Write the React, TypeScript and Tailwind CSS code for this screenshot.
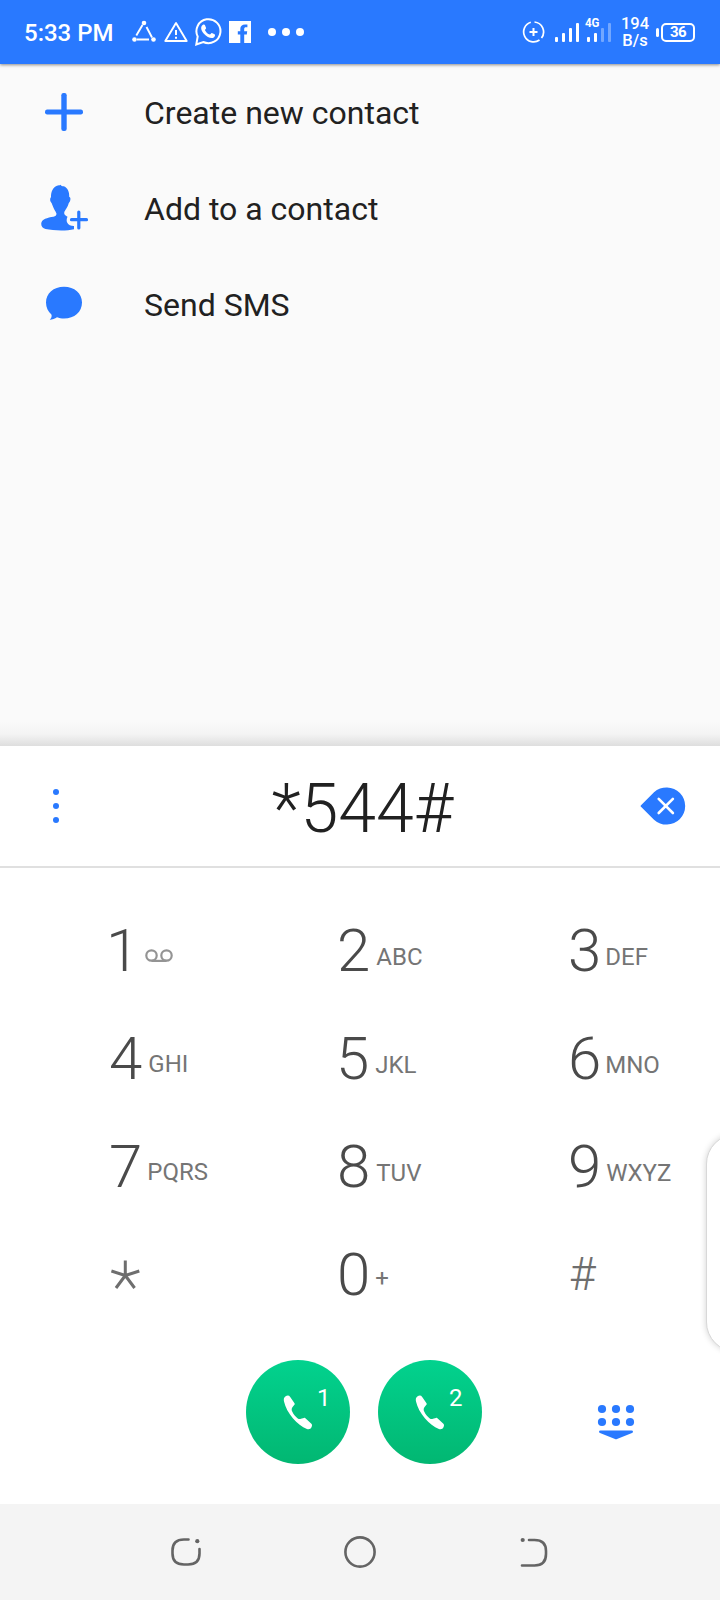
/**
 * Dialer — phone keypad with contact actions and dual SIM call buttons.
 */

import React from 'react';

interface DialKey {
  digit: string;
  label?: string;
  digitClass?: string;
  labelClass?: string;
}

const KEYS: DialKey[] = [
  { digit: '1', digitClass: '-ml-[3px]' },
  { digit: '2', label: 'ABC', digitClass: '-ml-px', labelClass: 'ml-[6px]' },
  { digit: '3', label: 'DEF', digitClass: '-ml-px', labelClass: 'ml-[4px]' },
  { digit: '4', label: 'GHI', labelClass: 'ml-[6px] -translate-y-px' },
  { digit: '5', label: 'JKL', digitClass: '-ml-[2px]', labelClass: 'ml-[6px]' },
  { digit: '6', label: 'MNO', digitClass: '-ml-px', labelClass: 'ml-[4px]' },
  { digit: '7', label: 'PQRS', labelClass: 'ml-[5px] -translate-y-px' },
  { digit: '8', label: 'TUV', digitClass: '-ml-px', labelClass: 'ml-[6px]' },
  { digit: '9', label: 'WXYZ', digitClass: '-ml-px', labelClass: 'ml-[5px]' },
  { digit: '*' },
  { digit: '0', label: '+', digitClass: '-ml-px', labelClass: 'ml-[5px] -translate-y-[3px]' },
  { digit: '#' },
];

const ACTIONS = [
  { label: 'Create new contact', icon: <PlusIcon /> },
  { label: 'Add to a contact', icon: <PersonAddIcon /> },
  { label: 'Send SMS', icon: <BubbleIcon /> },
];

function PlusIcon() {
  return (
    <svg width="64" height="64" viewBox="0 0 64 64" fill="#2979ff">
      <rect x="13" y="29.5" width="38" height="5" rx="2.2" />
      <rect x="29.3" y="13" width="5.4" height="38" rx="2.2" />
    </svg>
  );
}

function PersonAddIcon() {
  return (
    <svg width="64" height="64" viewBox="0 0 64 64" fill="#2979ff">
      <path d="M28.5 8.7c.7 1.4 1.8 1.2 3.2 1.6 3.7 1.2 5.7 5.2 5.5 10.5 2 .8 1.4 4.5-.4 6.2-.9 4-3.300 6.500-4.400 8.700-.4 1.300-.2 2.400.6 3.300 1 .8 1.700 1.200 2.500 1.800-2.300 4.700.1 9.300 6.500 9.200v3.200c-7.500 1.900-20.500 1.500-28.500-.2-2.500-.7-4.300-2.400-4.300-5.300.2-4.500 6.300-6.200 12.300-7 2-.4 2.900-1.400 3-3-.1-1.400-2.500-3.700-4.800-10.500-1.700-1.400-2.200-4.700-.7-6.200-.1-4.700 1.700-9.500 6-11.200 1.300-.5 2.700-.4 3.500-1.100z" />
      <path d="M39.5 43.7h15M46.8 36v16" fill="none" stroke="#2979ff" strokeWidth="3.2" strokeLinecap="round" />
    </svg>
  );
}

function BubbleIcon() {
  return (
    <svg width="64" height="64" viewBox="0 0 64 64" fill="#2979ff">
      <path d="M32 14.700c10.500 0 18 6.600 18 15.800 0 9.300-7.500 16-18 16-2.600 0-4.800-.4-7-1.200-2.100 1.600-4.700 2.500-7.300 2.500 1.700-1.700 2.400-3.700 1.700-5.400C16 39.500 14 35.500 14 30.500c0-9.200 7.500-15.800 18-15.800z" />
    </svg>
  );
}

function StatusBar() {
  return (
    <header className="relative z-10 flex h-16 shrink-0 items-center bg-[#2979ff] text-white shadow-[0_1px_3px_rgba(0,0,0,0.45)]">
      <span className="w-[132px] pt-px pl-[24px] text-[24px] leading-none font-medium whitespace-nowrap">5:33 PM</span>

      {/* Notification icons */}
      <svg width="24" height="24" viewBox="0 0 24 24" fill="none" stroke="white" strokeWidth="1.9">
        <path d="M10.5 5 4.3 15.5M14.5 7l5.500 10.5M5 19.500h12" />
        <g fill="white" stroke="none">
          <circle cx="12" cy="3" r="2.3" />
          <circle cx="2.5" cy="19.5" r="2.3" />
          <circle cx="21.5" cy="19.5" r="2.3" />
        </g>
      </svg>
      <svg className="ml-2" width="24" height="24" viewBox="0 0 24 24" fill="none" stroke="white" strokeWidth="1.9" strokeLinejoin="round">
        <path d="M12 3 1.3 21h21.400z" />
        <path d="M12 10v5M12 16.800v2" strokeWidth="2" />
      </svg>
      <svg className="-mt-[2px] ml-[6px]" width="28" height="30" viewBox="0 0 28 30" fill="none" stroke="white" strokeWidth="2">
        <path d="M2.300 28.500 3.700 20.500A12 12 0 1 1 9.300 26z" />
        <path d="M9 8.800c.9-.5 1.700-.3 2 .5l1.100 2.600c.2.700-.8 1.500-1.200 2 1 2.300 2.800 3.900 5 4.700.7-.5 1.300-1.800 2-1.600l2.700 1.300c1 .5.200 2.700-1.200 3.400-2.300 1.100-6.600-.7-9.500-4-2.900-3.200-3.900-6.900-.9-8.900z" fill="white" stroke="none" />
      </svg>
      <svg className="ml-[7px]" width="22" height="22" viewBox="0 0 22 22">
        <path fill="white" d="M0 0h22v22h-6.800v-8.500h2.600l.4-3.200h-3V8c0-1.100.5-1.700 1.900-1.700h1.300V3.500h-2.300c-3 0-4.800 1.700-4.800 4.500v2.300H8.800v3.200h2.500V22H0z" />
      </svg>
      <div className="ml-[17px] flex gap-[6px]">
        <span className="size-2 rounded-full bg-white" />
        <span className="size-2 rounded-full bg-white" />
        <span className="size-2 rounded-full bg-white" />
      </div>

      {/* Network and battery */}
      <div className="ml-auto flex items-center pr-[25px]">
        <svg width="23" height="24" viewBox="0 0 23 24" fill="none" stroke="white" strokeWidth="1.7">
          <path d="M8.800 2.300A10 10 0 1 0 17.500 20M12.500 2A10 10 0 0 1 19.500 18" />
          <path d="M11.500 8v8M7.500 12h8" strokeWidth="2" />
        </svg>
        <svg className="ml-[10px] overflow-visible" width="58" height="28" viewBox="0 0 58 28" fill="white">
          <rect x="0" y="19" width="3" height="5" rx="1" />
          <rect x="7" y="15" width="3" height="9" rx="1" />
          <rect x="14" y="10" width="3" height="14" rx="1" />
          <rect x="21" y="5" width="3" height="19" rx="1" />
          <rect x="32" y="19" width="3" height="5" rx="1" />
          <rect x="39" y="15" width="3" height="9" rx="1" />
          <rect x="46" y="10" width="3" height="14" rx="1" opacity=".35" />
          <rect x="53" y="5" width="3" height="19" rx="1" opacity=".35" />
          <text x="30" y="9" fontSize="12.5" fontWeight="700" textLength="14.5" lengthAdjust="spacingAndGlyphs">4G</text>
        </svg>
        <div className="ml-[8px] flex w-[28px] flex-col items-center text-[16.5px] leading-[17px] font-medium whitespace-nowrap">
          <span>194</span>
          <span>B/s</span>
        </div>
        <span className="ml-[7px] h-[9px] w-[3px] rounded-sm bg-white" />
        <span className="ml-[2px] flex h-[19px] w-[34px] items-center justify-center rounded-[5px] border-2 border-white text-[15px] leading-none font-bold tracking-[-0.5px]">
          36
        </span>
      </div>
    </header>
  );
}

function KeyCell({ digit, label, digitClass = '', labelClass = '' }: DialKey) {
  if (digit === '*') {
    return (
      <div className="flex h-[108px] items-center">
        <svg className="mt-[2px] ml-[2px]" width="29" height="30" viewBox="0 0 29 30" fill="none" stroke="#6e6e6e" strokeWidth="3">
          <path d="M14.300 .500v15M14.300 15.500.400 11M14.300 15.500l14-4.500M14.300 15.500 5 28M14.300 15.500 23.600 28" />
        </svg>
      </div>
    );
  }
  if (digit === '#') {
    return (
      <div className="flex h-[108px] items-center text-[46px] leading-none font-light text-[#6e6e6e]">#</div>
    );
  }
  return (
    <div className="flex h-[108px] items-baseline">
      <span className={`text-[60px] leading-[110px] font-light text-[#4a4a4a] ${digitClass}`}>{digit}</span>
      {label ? (
        <span className={`text-[24px] text-[#757575] ${labelClass}`}>
          <span className="relative -top-[6px]">{label}</span>
        </span>
      ) : (
        <svg className="relative top-[-8px] ml-[6px]" width="28" height="14" viewBox="0 0 28 14" fill="none" stroke="#949494" strokeWidth="2.2">
          <circle cx="6.5" cy="6.5" r="5.2" />
          <circle cx="21.5" cy="6.5" r="5.2" />
          <path d="M6.500 11.900h15" />
        </svg>
      )}
    </div>
  );
}

function CallButton({ sim }: { sim: number }) {
  return (
    <button className="relative size-[104px] rounded-full bg-linear-to-b from-[#02d28e] to-[#02b772] text-white">
      <svg className="absolute top-[35px] left-[37px]" width="30" height="35" viewBox="0 0 30 35" fill="white">
        <path d="M2.300 1.600C4.200.2 6 .3 7.200 1.900l4.300 6.300c.4.700.2 1.300-.3 1.800L9.400 12.300c-.9 1.300-.9 2.800-.2 4.200 1.500 3.100 3.300 5.300 5.600 6.900 1 .6 2 .6 3.200.3l2.900-.8c.7-.2 1.300 0 1.800.5l5.700 5.400c.9.900.7 2 .2 3.100-.8 1.900-2.500 2.700-4.700 2C14.500 30.500 3.500 18 1 6.500.6 4.500.8 2.700 2.300 1.600z" />
      </svg>
      <span className="absolute top-[26px] left-[71px] text-[24px] leading-6">{sim}</span>
    </button>
  );
}

function NavBar() {
  return (
    <nav className="flex h-24 shrink-0 items-center justify-center bg-[#f4f4f4]">
      <svg width="380" height="36" viewBox="0 0 380 36" fill="none" stroke="#646464" strokeWidth="2.6" strokeLinecap="round">
        <path d="M18.500 5.500H14q-11.500 0-11.500 11v3q0 11 11.500 11h4q11.500 0 11.500-11V15" />
        <circle cx="27.3" cy="7.2" r="2.1" fill="#646464" stroke="none" />
        <circle cx="190" cy="18" r="14.6" />
        <path d="M359 6h5.500q11.500 0 11.500 11v3q0 11.500-11.500 11.500H352" />
        <circle cx="352.7" cy="6" r="2.1" fill="#646464" stroke="none" />
      </svg>
    </nav>
  );
}

export default function App() {
  return (
    <div className="relative flex h-[1600px] w-[720px] flex-col overflow-hidden bg-[#fafafa] font-['Roboto',sans-serif]">
      <StatusBar />

      {/* Contact actions */}
      <ul className="h-[658px] shrink-0">
        {ACTIONS.map((a) => (
          <li key={a.label} className="flex h-24 items-center pl-8 text-[#212121]">
            {a.icon}
            <span className="ml-[48px] pt-[2px] text-[32px] leading-none">{a.label}</span>
          </li>
        ))}
      </ul>
      <div className="h-6 shrink-0 bg-linear-to-b from-[#fafafa] via-[#f4f4f4] to-[#dedede]" />

      {/* Entered number */}
      <section className="flex h-[122px] shrink-0 items-center border-b-2 border-[#e0e0e0] bg-white">
        <div className="ml-[53px] flex w-[6px] flex-col gap-2">
          <span className="size-[6px] rounded-full bg-[#2979ff]" />
          <span className="size-[6px] rounded-full bg-[#2979ff]" />
          <span className="size-[6px] rounded-full bg-[#2979ff]" />
        </div>
        <div className="flex-1 pt-[5px] pl-[26px] text-center text-[68px] leading-none font-light text-[#212121]">*544#</div>
        <svg className="mr-[34px]" width="46" height="38" viewBox="0 0 46 38">
          <path d="M1 18.200 14 5.300A18.600 18.600 0 1 1 14 32.700L1 19.800q-.8-.8 0-1.600z" fill="#2979ff" />
          <path d="m18.700 11.800 14.200 14.200M32.900 11.800 18.700 26" stroke="white" strokeWidth="2.6" strokeLinecap="round" />
        </svg>
      </section>

      {/* Keypad */}
      <section className="grid shrink-0 grid-cols-[229px_231px_1fr] bg-white pt-7 pl-[109px]">
        {KEYS.map((k) => (
          <KeyCell key={k.digit} {...k} />
        ))}
      </section>

      <section className="flex h-[176px] shrink-0 items-start bg-white pt-8 pl-[246px]">
        <div className="flex gap-7">
          <CallButton sim={1} />
          <CallButton sim={2} />
        </div>
        <svg className="mt-[44px] ml-[115px]" width="38" height="36" viewBox="0 0 38 36" fill="#2979ff">
          <circle cx="5" cy="5" r="4.1" />
          <circle cx="19" cy="5" r="4.1" />
          <circle cx="33" cy="5" r="4.1" />
          <circle cx="5" cy="18" r="4.1" />
          <circle cx="19" cy="18" r="4.1" />
          <circle cx="33" cy="18" r="4.1" />
          <path d="M3.500 26.500h31q1.500 0 1.500 1.200 0 .9-1 1.300l-15 6q-1 .4-2 0L3 29q-1-.4-1-1.300 0-1.200 1.500-1.200z" />
        </svg>
      </section>

      <NavBar />

      {/* Edge panel handle */}
      <div className="absolute top-[1134px] -right-[46px] h-[218px] w-[60px] rounded-[30px] border border-[#d8d8d8] bg-white shadow-[0_0_6px_rgba(0,0,0,0.18)]" />
    </div>
  );
}
